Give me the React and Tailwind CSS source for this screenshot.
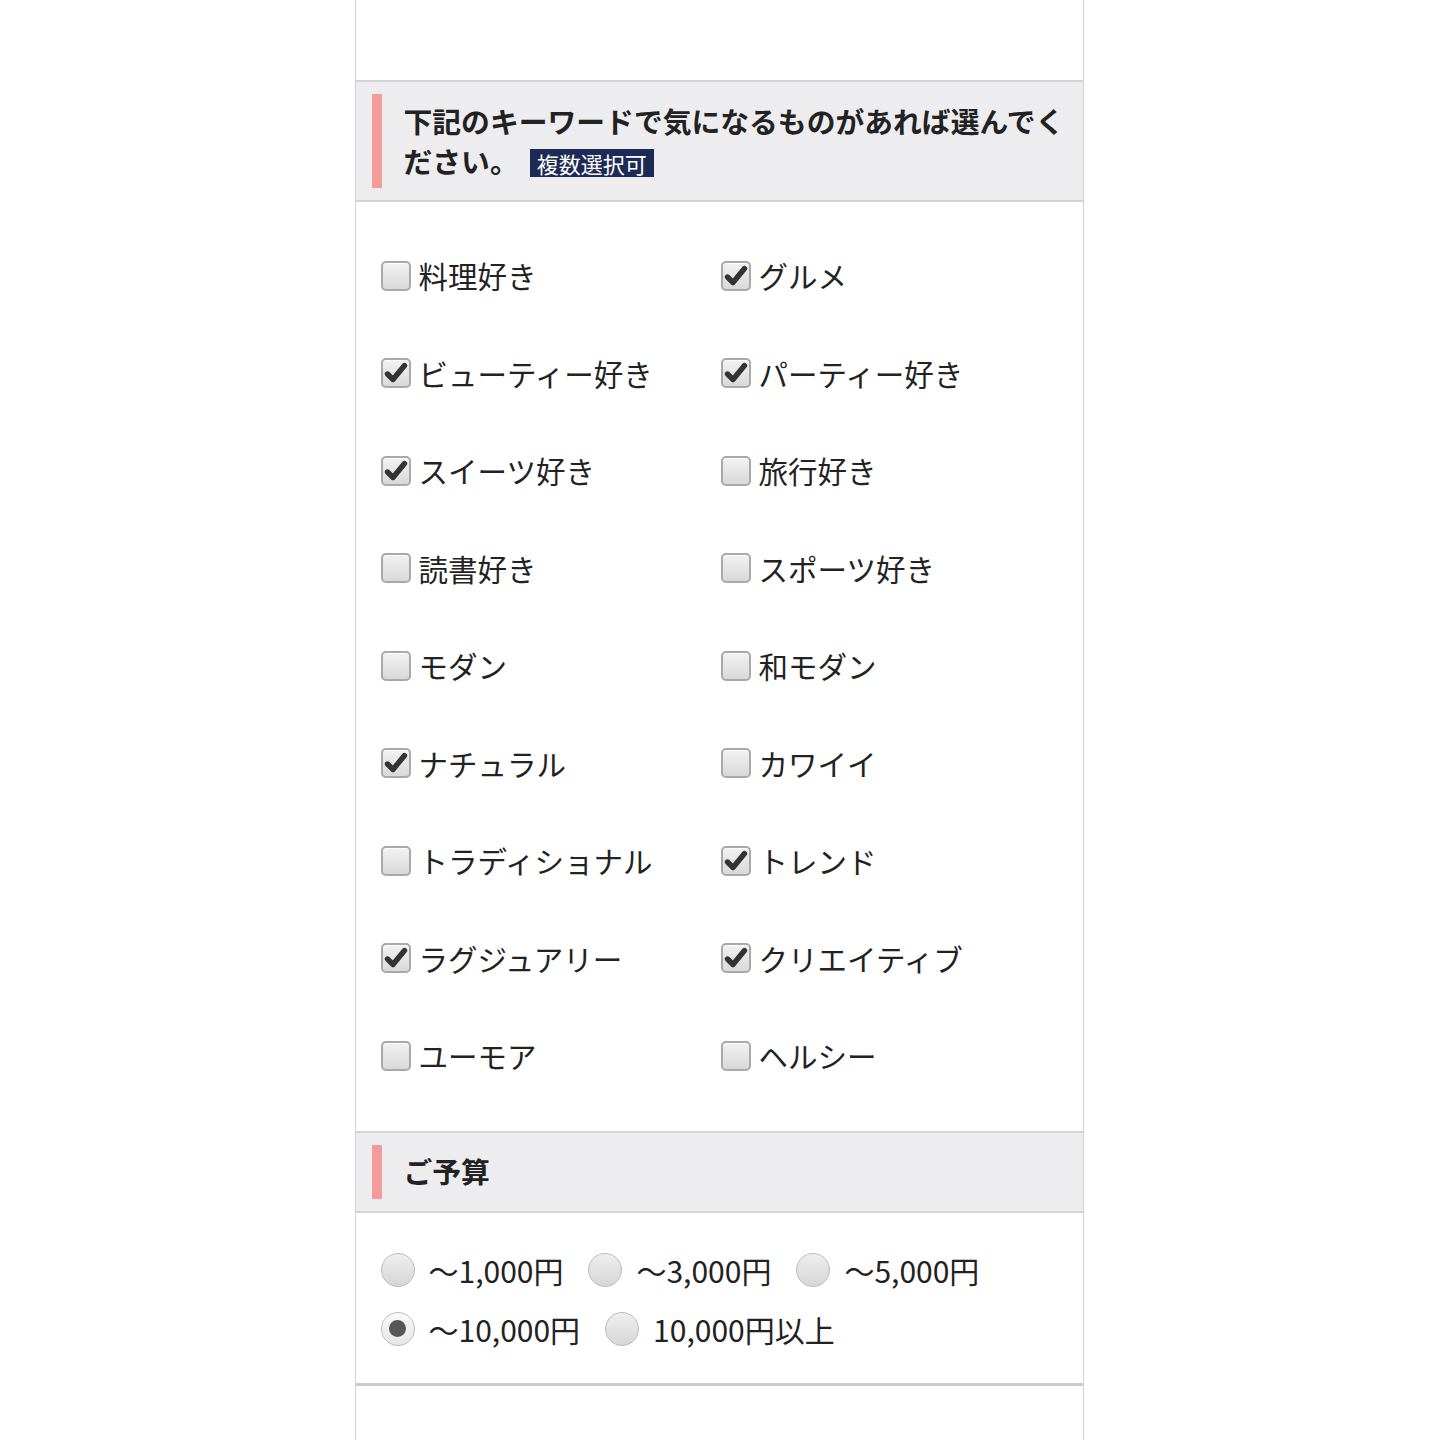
import React from "react";

const items = [
  ["料理好き", false, "グルメ", true],
  ["ビューティー好き", true, "パーティー好き", true],
  ["スイーツ好き", true, "旅行好き", false],
  ["読書好き", false, "スポーツ好き", false],
  ["モダン", false, "和モダン", false],
  ["ナチュラル", true, "カワイイ", false],
  ["トラディショナル", false, "トレンド", true],
  ["ラグジュアリー", true, "クリエイティブ", true],
  ["ユーモア", false, "ヘルシー", false],
];

const budgets = [
  ["〜1,000円", false],
  ["〜3,000円", false],
  ["〜5,000円", false],
  ["〜10,000円", true],
  ["10,000円以上", false],
];

function Checkbox({ checked }) {
  return (
    <div className="relative w-[30px] h-[30px] shrink-0 rounded-[5px] border-2 border-[#a9a9a9] bg-gradient-to-b from-[#f2f2f2] to-[#d9d9d9] shadow-[inset_0_1px_0_#ffffff]">
      {checked && (
        <svg viewBox="0 0 30 30" className="absolute left-[-2px] top-[-2px] w-[30px] h-[30px]">
          <path d="M6.5 16 L12 21.5 L23.5 7.5" fill="none" stroke="#333333" strokeWidth="5.4" strokeLinecap="round" strokeLinejoin="round" />
        </svg>
      )}
    </div>
  );
}

function Radio({ checked }) {
  return (
    <div
      className={
        "w-[34px] h-[34px] shrink-0 rounded-full border border-[#bcbcbc] flex items-center justify-center " +
        (checked
          ? "bg-gradient-to-b from-[#fafafa] to-[#e6e6e6]"
          : "bg-gradient-to-b from-[#efefef] to-[#d6d6d6]")
      }
    >
      {checked && <div className="w-[17px] h-[17px] rounded-full bg-[#575757]" />}
    </div>
  );
}

function SectionHeader({ children }) {
  return (
    <div className="border-t-2 border-b-2 border-[#d3d3d3] bg-[#ededef] pl-[16px] pr-[12px]">
      {children}
    </div>
  );
}

export default function App() {
  return (
    <div
      className="w-[1440px] min-h-[1440px] bg-white flex justify-center pr-[2px] text-[#222222]"
      style={{ fontFamily: '"Noto Sans CJK JP", "Noto Sans", sans-serif' }}
    >
      <div className="w-[729px] min-h-[1440px] border-x border-[#d2d2d2] flex flex-col">
        <div className="h-[80px]" />

        <SectionHeader>
          <div className="flex py-[12px]">
            <div className="w-[10px] bg-[#f59b9b] shrink-0" />
            <div className="pl-[22px] py-[7px] text-[28.8px] font-bold leading-[40px] text-[#222222]">
              下記のキーワードで気になるものがあれば選んでく
              <br />
              ださい。
              <span className="inline-block ml-[11px] align-[0px] bg-[#1d2a55] text-white text-[22px] font-normal leading-[28px] px-[7px]">
                複数選択可
              </span>
            </div>
          </div>
        </SectionHeader>

        <div className="pt-[25px] pb-[26px] pl-[25px]">
          {items.map((row, i) => (
            <div key={i} className="grid grid-cols-[340px_340px] h-[97.5px] items-center">
              <div className="flex items-center gap-[8px]">
                <Checkbox checked={row[1]} />
                <span className="text-[29.5px] leading-none">{row[0]}</span>
              </div>
              <div className="flex items-center gap-[8px]">
                <Checkbox checked={row[3]} />
                <span className="text-[29.5px] leading-none">{row[2]}</span>
              </div>
            </div>
          ))}
        </div>

        <SectionHeader>
          <div className="flex py-[12px]">
            <div className="w-[10px] h-[54px] bg-[#f59b9b] shrink-0" />
            <div className="pl-[22px] flex items-center text-[28.8px] font-bold leading-none">
              ご予算
            </div>
          </div>
        </SectionHeader>

        <div className="pt-[40px] pb-[37px] pl-[25px] pr-[20px] flex flex-wrap gap-x-[25px] gap-y-[25px]">
          {budgets.map(([label, checked], i) => (
            <div key={i} className="flex items-center h-[34px] gap-[14px]">
              <Radio checked={checked} />
              <span className="text-[30px] leading-none text-[#222222]">{label}</span>
            </div>
          ))}
        </div>

        <div className="border-t-[3px] border-[#cccccc] flex-1" />
      </div>
    </div>
  );
}
